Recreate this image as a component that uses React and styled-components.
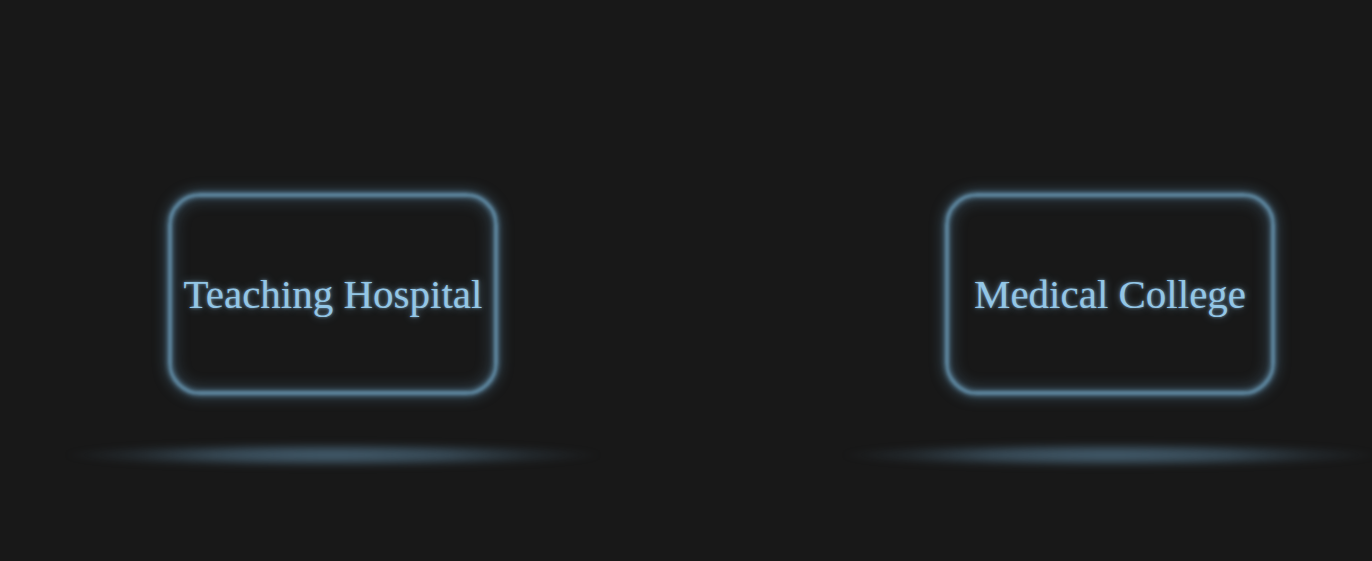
import React from "react";
import styled, { createGlobalStyle } from "styled-components";

const Global = createGlobalStyle`
  html, body { margin: 0; padding: 0; background: #181818; }
  body { width: 1372px; height: 561px; overflow: hidden; }
`;

const Stage = styled.div`
  display: flex;
  align-items: flex-start;
  gap: 447px;
  padding: 193px 0 0 168px;
  height: 561px;
  box-sizing: border-box;
`;

const Item = styled.div`
  display: flex;
  flex-direction: column;
  align-items: center;
  width: 330px;
`;

const Card = styled.div`
  position: relative;
  box-sizing: border-box;
  width: 330px;
  height: 202px;
  border-radius: 32px;
  display: flex;
  align-items: center;
  justify-content: center;
  background: #181818;

  &::before {
    content: "";
    position: absolute;
    inset: 0;
    border-radius: 32px;
    border: 4px solid rgba(100, 145, 172, 0.85);
    box-shadow:
      0 0 4px 1px rgba(105, 155, 185, 0.55),
      0 0 14px 2px rgba(105, 160, 195, 0.35),
      inset 0 0 4px 1px rgba(105, 155, 185, 0.55),
      inset 0 0 16px 2px rgba(105, 160, 195, 0.3);
    filter: blur(1px);
    pointer-events: none;
  }
`;

const Label = styled.span`
  position: relative;
  font-family: "Liberation Serif", "Times New Roman", serif;
  font-size: 41px;
  color: #93c6e6;
  text-shadow: 0 0 3px rgba(150, 200, 235, 0.65), 0 0 8px rgba(140, 195, 230, 0.45);
  white-space: nowrap;
  line-height: 1;
  margin-top: 1px;
`;

const Reflection = styled.div`
  width: 540px;
  height: 26px;
  margin-top: 47px;
  flex-shrink: 0;
  background: radial-gradient(
    ellipse 50% 50% at center,
    rgba(75, 105, 125, 0.85) 0%,
    rgba(75, 105, 125, 0.6) 45%,
    rgba(75, 105, 125, 0.2) 75%,
    rgba(75, 105, 125, 0) 100%
  );
  filter: blur(3px);
`;

const items = ["Teaching Hospital", "Medical College"];

export default function App() {
  return (
    <>
      <Global />
      <Stage>
        {items.map((t) => (
          <Item key={t}>
            <Card>
              <Label>{t}</Label>
            </Card>
            <Reflection />
          </Item>
        ))}
      </Stage>
    </>
  );
}
